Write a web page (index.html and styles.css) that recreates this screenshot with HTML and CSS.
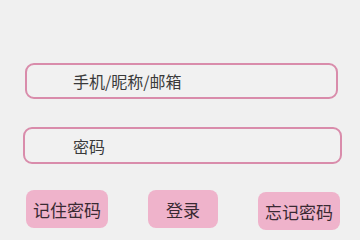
FILE: index.html
```html
<!DOCTYPE html>
<html lang="zh-CN">
<head>
  <meta charset="UTF-8" />
  <title>登录</title>
  <link rel="stylesheet" href="styles.css">
</head>
<body>
  <div class="login">
    <div class="field field-user">
      <input type="text" placeholder="手机/昵称/邮箱" />
    </div>
    <div class="field field-pass">
      <input type="password" placeholder="密码" />
    </div>
    <div class="actions">
      <button class="btn">记住密码</button>
      <button class="btn btn-main">登录</button>
      <button class="btn btn-forget">忘记密码</button>
    </div>
  </div>
</body>
</html>
```

FILE: styles.css
```css
body {
  margin: 0;
  background-color: #f0f0f0;
  font-family: "Noto Sans CJK SC", "Noto Sans", sans-serif;
}

.login {
  display: flex;
  flex-direction: column;
  padding-top: 63px;
}

.field {
  display: flex;
  box-sizing: border-box;
  border: 2px solid #d98cab;
  border-radius: 9px;
  background-color: #f1f1f1;
}

.field-user {
  margin: 0 22px 0 25px;
  height: 36px;
}

.field-pass {
  margin: 28px 18px 0 23px;
  height: 37px;
}

.field input {
  flex: 1;
  border: none;
  outline: none;
  background: transparent;
  padding: 0 0 0 48px;
  font-family: inherit;
  font-size: 16px;
  color: #333;
}

.field-user input {
  padding-left: 46px;
}

.field input::placeholder {
  color: #3a3a3a;
}

.actions {
  display: flex;
  justify-content: space-between;
  align-items: flex-start;
  padding: 0 20px 0 26px;
  margin-top: 26px;
}

.btn {
  height: 38px;
  padding: 0 7px;
  border: none;
  border-radius: 8px;
  background-color: #efb3cb;
  font-family: inherit;
  font-size: 17px;
  color: #3a2a33;
  cursor: pointer;
}

.btn-main {
  padding: 0 18px;
}

.btn-forget {
  margin-top: 2px;
}
```
